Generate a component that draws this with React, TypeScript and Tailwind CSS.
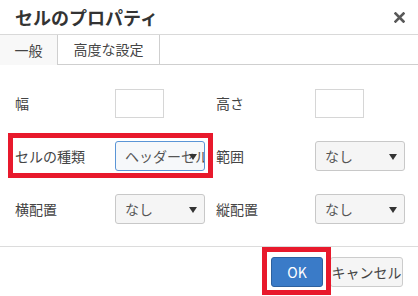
import React from "react";

const font = { fontFamily: '"Noto Sans CJK JP", "Noto Sans", sans-serif' };

function Arrow() {
  return (
    <svg width="8" height="6" viewBox="0 0 8 6" className="absolute right-[7px] top-[12px]">
      <path d="M0 0 L8 0 L4 6 Z" fill="#333" />
    </svg>
  );
}

function Select({ value, focused }: { value: string; focused?: boolean }) {
  return (
    <div
      className={`relative h-[30px] w-[90px] overflow-hidden rounded-[3px] border pl-[9px] text-[14px] leading-[28px] text-[#555] ${
        focused ? "border-[#5a95d6] bg-[#f6f8fa]" : "border-[#c8c8c8] bg-[#f5f5f5]"
      }`}
    >
      <span className="whitespace-nowrap">{value}</span>
      <Arrow />
    </div>
  );
}

function TextBox() {
  return <div className="h-[29px] w-[49px] border border-[#d6d6d6] bg-white" />;
}

function Row({ children }: { children: React.ReactNode }) {
  return <div className="flex h-[30px] items-center">{children}</div>;
}

function Label({ children, wide }: { children: React.ReactNode; wide?: boolean }) {
  return <div className={`${wide ? "w-[100px]" : "w-[99px]"} text-[14px] text-[#444]`}>{children}</div>;
}

export default function App() {
  return (
    <div className="relative h-[296px] w-[418px] overflow-hidden bg-white" style={font}>
      {/* header */}
      <div className="flex h-[35px] items-center justify-between border-b border-[#d9d9d9] pl-[15px] pr-[13px]">
        <div className="text-[18px] font-bold text-[#333]">セルのプロパティ</div>
        <svg width="11" height="11" viewBox="0 0 11 11">
          <path d="M1.5 1.5 L9.5 9.5 M9.5 1.5 L1.5 9.5" stroke="#595959" strokeWidth="2.6" strokeLinecap="square" />
        </svg>
      </div>

      {/* tabs */}
      <div className="flex h-[30px]">
        <div className="flex w-[58px] items-center justify-center border-r border-[#cfcfcf] bg-[#f8f8f8] text-[14px] text-[#444]">
          一般
        </div>
        <div className="flex w-[102px] items-center justify-center border-r border-b border-[#cfcfcf] text-[14px] text-[#444]">
          高度な設定
        </div>
        <div className="flex-1 border-b border-[#cfcfcf]" />
      </div>

      {/* body */}
      <div className="flex flex-col gap-[23px] pl-[15px] pt-[23px]">
        <Row>
          <Label wide>幅</Label>
          <div className="w-[90px]">
            <TextBox />
          </div>
          <div className="w-[11px]" />
          <Label>高さ</Label>
          <TextBox />
        </Row>
        <Row>
          <Label wide>セルの種類</Label>
          <Select value="ヘッダーセル" focused />
          <div className="w-[11px]" />
          <Label>範囲</Label>
          <Select value="なし" />
        </Row>
        <Row>
          <Label wide>横配置</Label>
          <Select value="なし" />
          <div className="w-[11px]" />
          <Label>縦配置</Label>
          <Select value="なし" />
        </Row>
      </div>

      {/* footer */}
      <div className="mt-[22px] flex justify-end gap-[7px] border-t border-[#dcdcdc] pr-[15px] pt-[10px]">
        <button className="h-[30px] w-[52px] rounded-[3px] border border-[#2d619f] bg-[#3a7bc8] text-[14px] text-white">
          OK
        </button>
        <button className="h-[30px] w-[73px] whitespace-nowrap rounded-[3px] border border-[#cccccc] bg-[#f5f5f5] px-0 text-[14px] text-[#444]">
          キャンセル
        </button>
      </div>

      {/* red highlight annotations */}
      <div className="pointer-events-none absolute left-[8px] top-[133px] h-[45px] w-[205px] border-[5px] border-[#e8192c]" />
      <div className="pointer-events-none absolute left-[262px] top-[247px] h-[48px] w-[69px] border-[5px] border-[#e8192c]" />
    </div>
  );
}
